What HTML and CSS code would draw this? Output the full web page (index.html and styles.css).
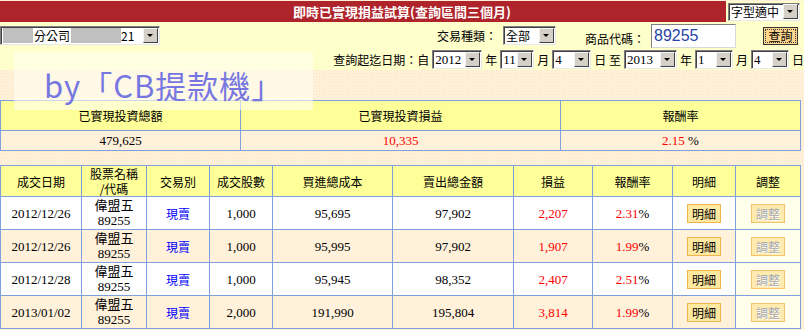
FILE: index.html
```html
<!DOCTYPE html>
<html lang="zh-Hant">
<head>
  <meta charset="UTF-8">
  <meta name="viewport" content="width=device-width, initial-scale=1.0">
  <title>即時已實現損益試算</title>
  <link rel="stylesheet" href="styles.css">
</head>
<body>
  <div class="page">
    <div class="top">
      <div class="titlebar">
        <div class="title">即時已實現損益試算(查詢區間三個月)</div>
        <div class="font-cell">
          <span class="sel sel-font"><span class="sel-text">字型適中</span><span class="sel-btn"></span></span>
        </div>
      </div>

      <div class="filter-row">
        <span class="sel sel-acct">
          <span class="sel-text"><span class="redact r1"></span>分公司<span class="redact r2"></span>21</span>
          <span class="sel-btn"></span>
        </span>
        <div class="filter-right">
          <span class="lbl">交易種類：</span>
          <span class="sel sel-type"><span class="sel-text">全部</span><span class="sel-btn"></span></span>
          <span class="lbl lbl-code">商品代碼：</span>
          <span class="code-input">89255</span>
          <button class="btn-query">查詢</button>
        </div>
      </div>

      <div class="date-row">
        <span class="lbl">查詢起迄日期：自</span>
        <span class="sel w-year"><span class="sel-text">2012</span><span class="sel-btn"></span></span>
        <span class="lbl">年</span>
        <span class="sel w-mon"><span class="sel-text">11</span><span class="sel-btn"></span></span>
        <span class="lbl">月</span>
        <span class="sel w-day"><span class="sel-text">4</span><span class="sel-btn"></span></span>
        <span class="lbl">日 至</span>
        <span class="sel w-year2"><span class="sel-text">2013</span><span class="sel-btn"></span></span>
        <span class="lbl">年</span>
        <span class="sel w-day2"><span class="sel-text">1</span><span class="sel-btn"></span></span>
        <span class="lbl">月</span>
        <span class="sel w-day2"><span class="sel-text">4</span><span class="sel-btn"></span></span>
        <span class="lbl">日</span>
      </div>
    </div>

    <!-- summary -->
    <table class="summary">
      <tr class="head">
        <td class="c1">已實現投資總額</td>
        <td class="c2">已實現投資損益</td>
        <td>報酬率</td>
      </tr>
      <tr class="data">
        <td>479,625</td>
        <td class="red">10,335</td>
        <td><span class="red">2.15</span> %</td>
      </tr>
    </table>

    <!-- detail list -->
    <table class="detail">
      <colgroup>
        <col style="width:81px"><col style="width:65px"><col style="width:63px"><col style="width:63px"><col style="width:120px">
        <col style="width:121px"><col style="width:79px"><col style="width:80px"><col style="width:63px"><col style="width:65px">
      </colgroup>
      <tr class="head">
        <td>成交日期</td>
        <td class="two">股票名稱<br>/代碼</td>
        <td>交易別</td>
        <td>成交股數</td>
        <td>買進總成本</td>
        <td>賣出總金額</td>
        <td>損益</td>
        <td>報酬率</td>
        <td>明細</td>
        <td>調整</td>
      </tr>
      <tr class="row">
        <td>2012/12/26</td>
        <td class="two">偉盟五<br>89255</td>
        <td class="blue">現賣</td>
        <td>1,000</td>
        <td>95,695</td>
        <td>97,902</td>
        <td class="red">2,207</td>
        <td><span class="red">2.31</span>%</td>
        <td><button class="btn-detail">明細</button></td>
        <td class="adj"><button class="btn-adj" disabled>調整</button></td>
      </tr>
      <tr class="row alt">
        <td>2012/12/26</td>
        <td class="two">偉盟五<br>89255</td>
        <td class="blue">現賣</td>
        <td>1,000</td>
        <td>95,995</td>
        <td>97,902</td>
        <td class="red">1,907</td>
        <td><span class="red">1.99</span>%</td>
        <td><button class="btn-detail">明細</button></td>
        <td class="adj"><button class="btn-adj" disabled>調整</button></td>
      </tr>
      <tr class="row">
        <td>2012/12/28</td>
        <td class="two">偉盟五<br>89255</td>
        <td class="blue">現賣</td>
        <td>1,000</td>
        <td>95,945</td>
        <td>98,352</td>
        <td class="red">2,407</td>
        <td><span class="red">2.51</span>%</td>
        <td><button class="btn-detail">明細</button></td>
        <td class="adj"><button class="btn-adj" disabled>調整</button></td>
      </tr>
      <tr class="row alt">
        <td>2013/01/02</td>
        <td class="two">偉盟五<br>89255</td>
        <td class="blue">現賣</td>
        <td>2,000</td>
        <td>191,990</td>
        <td>195,804</td>
        <td class="red">3,814</td>
        <td><span class="red">1.99</span>%</td>
        <td><button class="btn-detail">明細</button></td>
        <td class="adj"><button class="btn-adj" disabled>調整</button></td>
      </tr>
    </table>

    <div class="watermark">by「CB提款機」</div>
  </div>
</body>
</html>
```

FILE: styles.css
```css
/* Page */
body {
  margin: 0;
  background-color: #fff1d9;
  background-image: radial-gradient(#ffe4c0 1px, transparent 1px);
  background-size: 3px 3px;
  font-family: "Liberation Serif", "Noto Sans CJK TC", serif;
  font-size: 12px;
  color: #000;
}
.page {
  position: relative;
  width: 804px;
  padding-top: 1px;
}

/* Top area */
.top {
  background-color: #ffffcc;
}
.titlebar {
  display: flex;
  height: 21px;
}
.title {
  flex: 1;
  background-color: #af242b;
  color: #fff;
  font-family: "Noto Sans CJK TC", sans-serif;
  font-weight: bold;
  font-size: 13px;
  line-height: 21px;
  text-align: center;
  padding-left: 78px;
}
.font-cell {
  width: 78px;
  display: flex;
  align-items: center;
  justify-content: flex-end;
  padding-right: 4px;
  box-sizing: border-box;
}

/* Fake classic select */
.sel {
  display: inline-flex;
  align-items: center;
  height: 19px;
  box-sizing: border-box;
  border: 1px solid;
  border-color: #808080 #e8e8e8 #e8e8e8 #808080;
  box-shadow: inset 1px 1px 0 #404040;
  background: #fff;
  padding: 1px 1px 1px 2px;
}
.sel-text {
  flex: 1;
  font-size: 13px;
  line-height: 15px;
  white-space: nowrap;
}
.sel-btn {
  position: relative;
  flex: none;
  width: 15px;
  height: 15px;
  box-sizing: border-box;
  background: #d4d0c8;
  border: 1px solid;
  border-color: #f4f4f4 #404040 #404040 #f4f4f4;
}
.sel-btn::after {
  content: "";
  position: absolute;
  left: 3px;
  top: 5px;
  border-left: 3px solid transparent;
  border-right: 3px solid transparent;
  border-top: 3px solid #000;
}
.sel-font { width: 72px; height: 18px; }
.sel-font .sel-text { font-family: "Noto Sans CJK TC", sans-serif; font-size: 12px; }
.sel-acct { width: 160px; }
.sel-acct .sel-text {
  display: flex;
  align-items: center;
  font-family: "Noto Sans CJK TC", sans-serif;
  font-size: 12px;
}
.sel-acct .sel-text .num { font-family: "Liberation Serif", serif; }
.redact { display: inline-block; height: 15px; background: #c0c0c0; }
.r1 { width: 30px; margin-right: 1px; }
.r2 { width: 50px; margin-left: 1px; }
.sel-type { width: 53px; }
.sel-type .sel-text { font-family: "Noto Sans CJK TC", sans-serif; font-size: 12px; }
.w-year { width: 50px; }
.w-year2 { width: 53px; }
.w-mon { width: 34px; }
.w-day { width: 39px; }
.w-day2 { width: 38px; }

/* Filters */
.filter-row {
  display: flex;
  align-items: center;
  height: 27px;
}
.filter-right {
  display: flex;
  align-items: center;
  margin-left: auto;
  padding-right: 6px;
}
.lbl {
  font-family: "Noto Sans CJK TC", sans-serif;
  font-size: 12px;
  white-space: nowrap;
}
.sel-type { margin-left: 6px; margin-right: 29px; }
.lbl-code { align-self: flex-end; margin-bottom: 1px; }
.code-input {
  width: 85px;
  height: 24px;
  box-sizing: border-box;
  margin-left: 6px;
  margin-right: 27px;
  border: 1px solid;
  border-color: #808080 #d8d8d8 #d8d8d8 #808080;
  background: #fff;
  font-family: "Liberation Sans", sans-serif;
  font-size: 16px;
  line-height: 22px;
  color: #2744a4;
  padding-left: 2px;
}
.btn-query {
  width: 35px;
  height: 18px;
  padding: 0;
  background: #ffd68e;
  border: 1px solid #333;
  outline: 1px dotted #333;
  outline-offset: -3px;
  font-family: "Noto Sans CJK TC", sans-serif;
  font-size: 12px;
  line-height: 14px;
  color: #000;
}
.date-row {
  display: flex;
  align-items: center;
  justify-content: flex-end;
  gap: 3px;
  height: 21px;
}

/* Summary table */
.summary {
  margin-top: 30px;
  width: 801px;
  border-collapse: collapse;
  table-layout: fixed;
}
.summary td {
  border: 1px solid #7f9fdf;
  text-align: center;
  padding: 0;
}
.summary .c1 { width: 239px; }
.summary .c2 { width: 319px; }
.summary .head td {
  background: #ffff99;
  height: 29px;
  font-family: "Noto Sans CJK TC", sans-serif;
}
.summary .data td {
  background: #fff1da;
  height: 19px;
  font-size: 13px;
}

/* Detail table */
.detail {
  margin-top: 14px;
  width: 801px;
  border-collapse: collapse;
  table-layout: fixed;
}
.detail td {
  border: 1px solid #7f9fdf;
  text-align: center;
  padding: 0;
  font-size: 13px;
  line-height: 15px;
}
.detail .head td {
  background: #ffff99;
  height: 29px;
  font-family: "Noto Sans CJK TC", sans-serif;
  font-size: 12px;
  line-height: 15px;
}
.detail .row td {
  height: 32px;
  background: #fff;
}
.detail .row.alt td { background: #fff1da; }
.detail .row td.adj { background: #ffffec; }
.red { color: #ff0000; }
.blue {
  color: #0000ff;
  font-family: "Noto Sans CJK TC", sans-serif;
}
.detail .row td.blue { font-size: 12px; }

/* Row buttons */
.btn-detail,
.btn-adj {
  width: 34px;
  height: 19px;
  padding: 0;
  font-family: "Noto Sans CJK TC", sans-serif;
  font-size: 12px;
  line-height: 15px;
}
.btn-detail {
  background: #ffe8a0;
  border: 1px solid #f0b44c;
  color: #000;
}
.btn-adj {
  background: #ffeab0;
  border: 1px solid #f5c46c;
  color: #a8a8a8;
  text-shadow: 1px 1px 0 #fff;
}

/* Watermark overlay */
.watermark {
  position: absolute;
  left: 14px;
  top: 52px;
  width: 299px;
  height: 58px;
  box-sizing: border-box;
  padding-left: 30px;
  background: rgba(255, 255, 240, 0.6);
  color: #7777e2;
  font-family: "Noto Sans CJK TC", sans-serif;
  font-size: 31px;
  letter-spacing: 1px;
  line-height: 66px;
  white-space: nowrap;
  overflow: hidden;
}
```
